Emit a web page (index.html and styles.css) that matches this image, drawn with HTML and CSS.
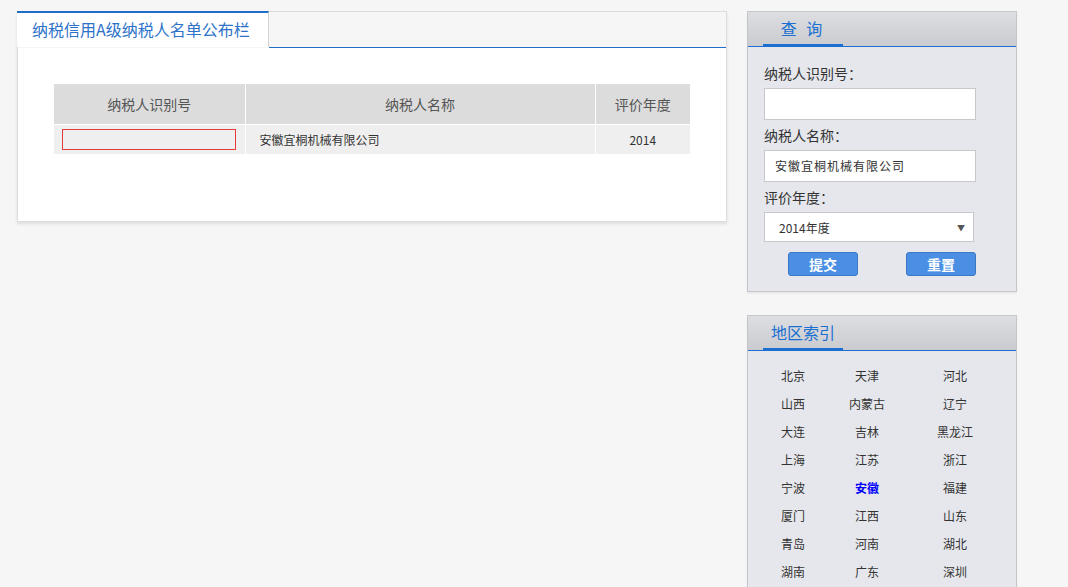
FILE: index.html
```html
<!DOCTYPE html>
<html lang="zh-CN">
<head>
<meta charset="utf-8">
<title>纳税信用A级纳税人名单公布栏</title>
<link rel="stylesheet" href="styles.css">
</head>
<body>
<div class="page">
  <div class="main-panel">
    <div class="main-head">
      <div class="main-tab">纳税信用A级纳税人名单公布栏</div>
      <div class="main-head-rest"></div>
    </div>
    <div class="main-body">
      <table class="list">
        <thead>
          <tr><th class="c1">纳税人识别号</th><th class="c2">纳税人名称</th><th class="c3">评价年度</th></tr>
        </thead>
        <tbody>
          <tr><td class="c1"><div class="idbox"></div></td><td class="c2 name">安徽宜桐机械有限公司</td><td class="c3">2014</td></tr>
        </tbody>
      </table>
    </div>
  </div>

  <div class="side">
    <div class="side-panel">
      <div class="side-head"><div class="side-tab tab-query">查 询</div></div>
      <div class="side-body form">
        <div class="label">纳税人识别号：</div>
        <div class="field"></div>
        <div class="label">纳税人名称：</div>
        <div class="field value">安徽宜桐机械有限公司</div>
        <div class="label">评价年度：</div>
        <div class="select"><span>2014年度</span><span class="arrow">▼</span></div>
        <div class="buttons">
          <button class="btn">提交</button>
          <button class="btn">重置</button>
        </div>
      </div>
    </div>

    <div class="side-panel">
      <div class="side-head"><div class="side-tab">地区索引</div></div>
      <div class="side-body regions">
        <span>北京</span><span>天津</span><span>河北</span>
        <span>山西</span><span>内蒙古</span><span>辽宁</span>
        <span>大连</span><span>吉林</span><span>黑龙江</span>
        <span>上海</span><span>江苏</span><span>浙江</span>
        <span>宁波</span><span class="active">安徽</span><span>福建</span>
        <span>厦门</span><span>江西</span><span>山东</span>
        <span>青岛</span><span>河南</span><span>湖北</span>
        <span>湖南</span><span>广东</span><span>深圳</span>
      </div>
    </div>
  </div>
</div>
</body>
</html>
```

FILE: styles.css
```css
* { box-sizing: border-box; }
html, body { margin: 0; padding: 0; }
body {
  background: #f6f6f6;
  font-family: "Noto Sans CJK SC", "Liberation Sans", sans-serif;
  color: #333;
  font-size: 12px;
}
.page {
  display: flex;
  align-items: flex-start;
  gap: 20px;
  padding: 11px 0 0 17px;
}

/* main panel */
.main-panel {
  width: 710px;
  background: #fff;
  border: 1px solid #dcdcdc;
  box-shadow: 0 2px 3px rgba(0,0,0,0.10);
}
.main-head {
  display: flex;
  height: 36px;
  background: #f6f6f6;
}
.main-tab {
  width: 252px;
  height: 36px;
  background: #fff;
  border-top: 2px solid #1f6fc8;
  border-right: 1px solid #d4d4d4;
  margin-top: -1px;
  margin-left: -1px;
  padding-left: 15px;
  font-size: 16px;
  line-height: 33px;
  color: #2c72c9;
}
.main-head-rest {
  flex: 1;
  border-bottom: 1px solid #1f6fc8;
}
.main-body {
  padding: 36px 0 67px 36px;
}
.list {
  border-collapse: collapse;
  width: 636px;
}
.list th, .list td {
  border-right: 1px solid #fff;
  padding: 0;
  text-align: center;
}
.list th:last-child, .list td:last-child { border-right: none; }
.list thead tr { border-bottom: 1px solid #fff; }
.list th {
  height: 40px;
  background: #dcdcdc;
  font-weight: normal;
  font-size: 14px;
  color: #555;
}
.list td {
  height: 30px;
  background: #efefef;
  font-size: 12px;
  color: #333;
}
.c1 { width: 191px; }
.c2 { width: 350px; }
.c3 { width: 95px; }
.list td.name { text-align: left; padding-left: 14px; }
.idbox {
  width: 174px;
  height: 21px;
  margin-left: 8px;
  border: 1px solid #e63b3b;
}

/* side */
.side {
  display: flex;
  flex-direction: column;
  gap: 23px;
}
.side-panel {
  width: 270px;
  background: #e6e7ec;
  border: 1px solid #c6c7cb;
  box-shadow: 0 2px 2px rgba(0,0,0,0.05);
}
.side-head {
  height: 35px;
  background: linear-gradient(#dddee2, #cacbcf);
  border-bottom: 1px solid #1a6fd0;
  padding-left: 15px;
  display: flex;
  align-items: flex-end;
}
.side-tab {
  width: 80px;
  height: 30px;
  margin-bottom: -1px;
  border-bottom: 3px solid #1a6fd0;
  text-align: center;
  font-size: 16px;
  line-height: 23px;
  color: #1a6fd0;
}
.tab-query { letter-spacing: 3px; }
.side-body { padding: 11px 0 15px 16px; }
.form .label {
  height: 30px;
  line-height: 30px;
  font-size: 14px;
  color: #333;
}
.form .field {
  width: 212px;
  height: 32px;
  background: #fff;
  border: 1px solid #c8c8cc;
}
.form .value {
  font-size: 12px;
  line-height: 30px;
  padding-left: 10px;
  letter-spacing: 1px;
  color: #333;
}
.form .select {
  width: 210px;
  height: 30px;
  background: #fff;
  border: 1px solid #c8c8cc;
  display: flex;
  align-items: center;
  justify-content: space-between;
  padding: 0 8px 0 14px;
  font-size: 12px;
  color: #333;
}
.form .arrow { font-size: 8px; color: #555; }
.buttons {
  display: flex;
  gap: 48px;
  margin-top: 10px;
  padding-left: 24px;
}
.btn {
  width: 70px;
  height: 24px;
  background: #4a8fe3;
  border: 1px solid #3b78c6;
  border-radius: 3px;
  color: #fff;
  font-family: "Noto Sans CJK SC", sans-serif;
  font-size: 14px;
  font-weight: bold;
  padding: 0;
  line-height: 22px;
}
.regions {
  display: grid;
  grid-template-columns: 58px 90px 86px;
  grid-auto-rows: 28px;
  padding-bottom: 10px;
}
.regions span {
  text-align: center;
  line-height: 28px;
  font-size: 12px;
  color: #333;
}
.regions span.active {
  color: #0000ff;
  font-weight: bold;
}
```
